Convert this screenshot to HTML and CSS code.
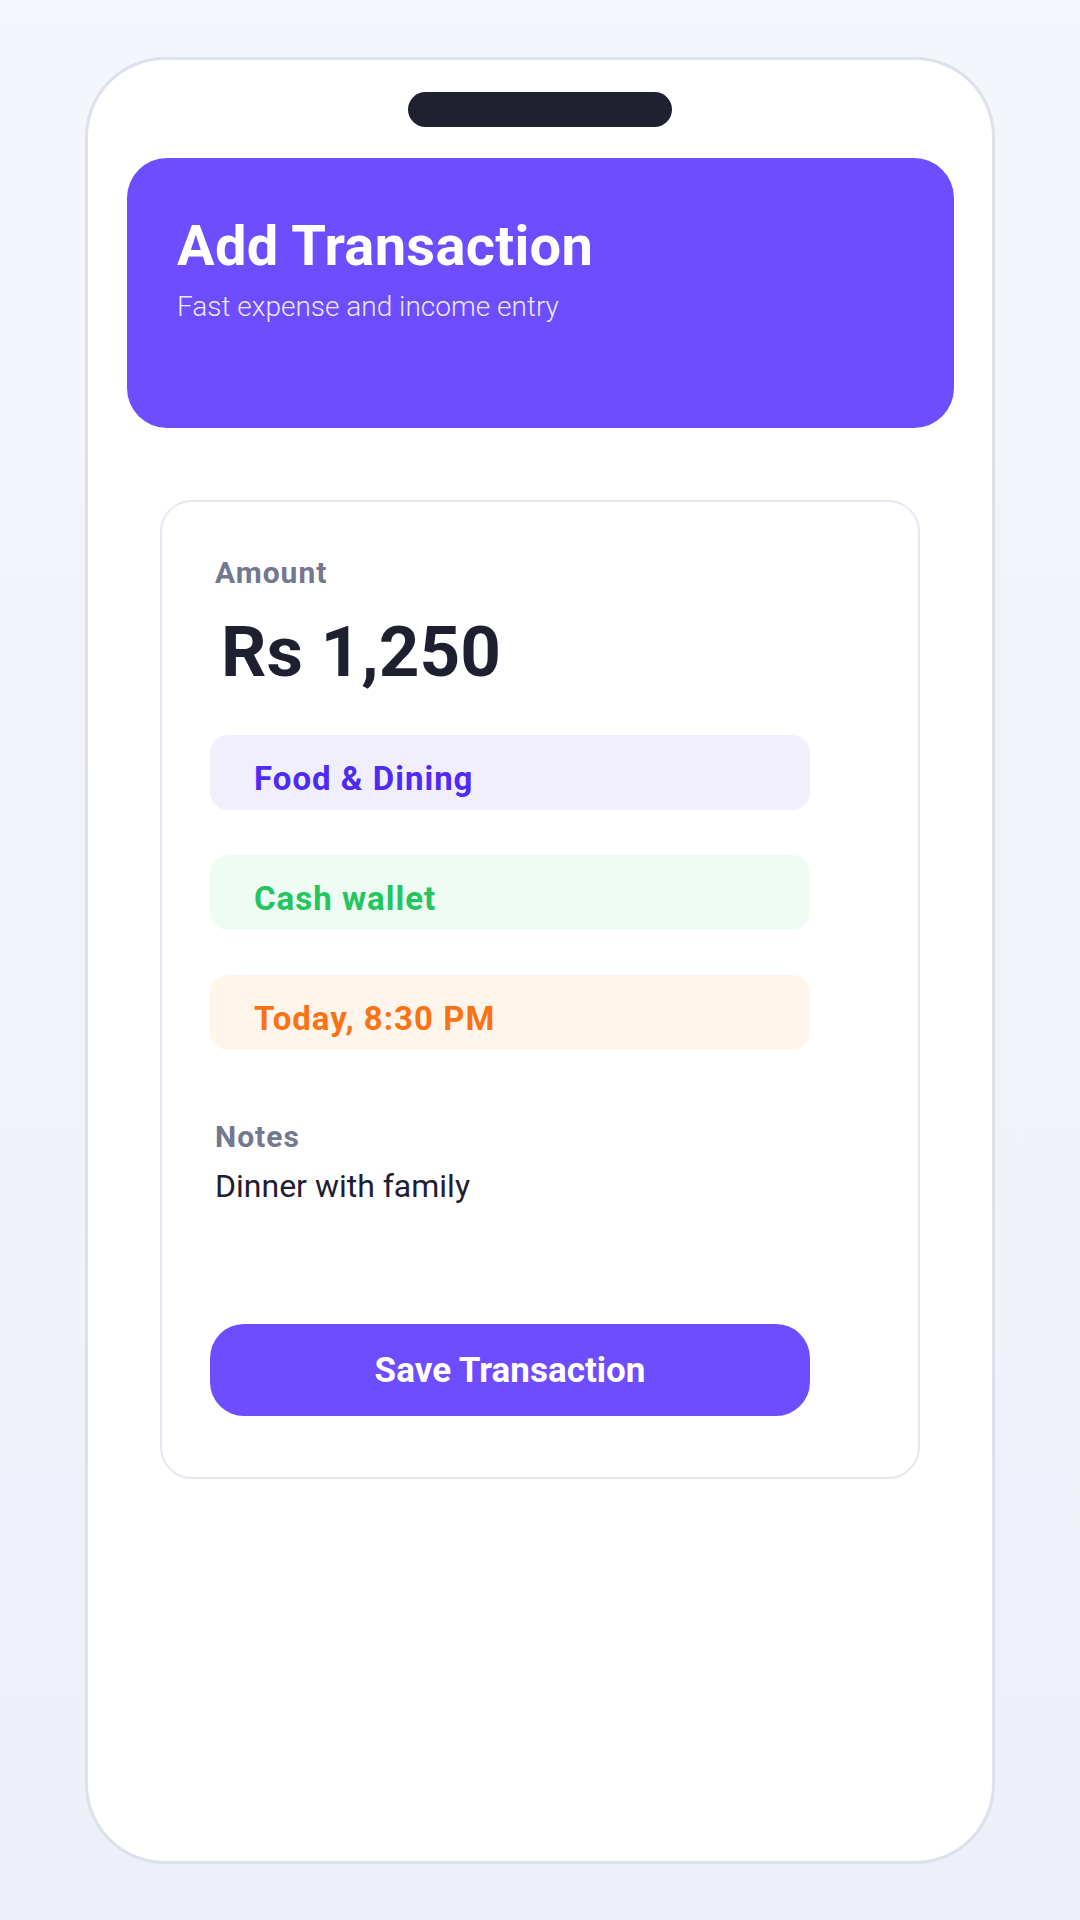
FILE: index.html
```html
<!DOCTYPE html>
<html lang="en">
  <head>
    <meta charset="UTF-8" />
    <meta name="viewport" content="width=device-width, initial-scale=1.0" />
    <title>Add Transaction</title>
    <link rel="stylesheet" href="styles.css">
  </head>
  <body>
    <div class="phone">
      <div class="notch"></div>

      <div class="header">
        <h1>Add Transaction</h1>
        <p>Fast expense and income entry</p>
      </div>

      <div class="card">
        <div class="field-label">Amount</div>
        <div class="amount">Rs 1,250</div>

        <div class="pills">
          <div class="pill pill-category">Food &amp; Dining</div>
          <div class="pill pill-wallet">Cash wallet</div>
          <div class="pill pill-date">Today, 8:30 PM</div>
        </div>

        <div class="field-label notes-label">Notes</div>
        <div class="notes-text">Dinner with family</div>

        <button class="save-button">Save Transaction</button>
      </div>
    </div>
  </body>
</html>
```

FILE: styles.css
```css
body {
  margin: 0;
  min-height: 1920px;
  font-family: Roboto, "Liberation Sans", sans-serif;
  background: linear-gradient(180deg, #f5f6fb 0%, #edf0f9 100%);
  color: #1e2030;
}
.phone {
  box-sizing: border-box;
  width: 910px;
  height: 1807px;
  margin: 57px auto 0;
  border: 3px solid #dde1ec;
  border-radius: 80px;
  background: #ffffff;
  display: flex;
  flex-direction: column;
  align-items: center;
}
.notch {
  width: 264px;
  height: 35px;
  margin-top: 32px;
  border-radius: 18px;
  background: #1f2130;
}
.header {
  box-sizing: border-box;
  align-self: stretch;
  height: 270px;
  margin: 31px 38px 0 39px;
  padding: 61px 50px 0;
  border-radius: 40px;
  background: #6e4cff;
  color: #ffffff;
}
.header h1 {
  margin: 0;
  font-size: 56px;
  line-height: 55px;
  font-weight: 700;
  letter-spacing: 0.3px;
}
.header p {
  margin: 19px 0 0;
  font-size: 28px;
  line-height: 28px;
  font-weight: 300;
  color: #ece8ff;
}
.card {
  box-sizing: border-box;
  width: 760px;
  margin-top: 72px;
  padding: 56px 48px 61px;
  border: 2px solid #e6e6f4;
  border-radius: 32px;
  display: flex;
  flex-direction: column;
  align-items: flex-start;
}
.field-label {
  padding-left: 5px;
  font-size: 30px;
  line-height: 30px;
  font-weight: 700;
  letter-spacing: 1px;
  color: #737790;
}
.amount {
  margin-top: 28px;
  padding-left: 11px;
  font-size: 71px;
  line-height: 72px;
  font-weight: 700;
  color: #1e2030;
}
.pills {
  margin-top: 47px;
  display: flex;
  flex-direction: column;
  gap: 45px;
}
.pill {
  box-sizing: border-box;
  width: 600px;
  height: 75px;
  padding: 11px 44px 0;
  border-radius: 18px;
  display: flex;
  align-items: center;
  font-size: 33px;
  font-weight: 700;
  letter-spacing: 1px;
}
.pill-category {
  background: #f1effe;
  color: #4e2bf3;
}
.pill-wallet {
  background: #eefcf3;
  color: #22c55e;
}
.pill-date {
  background: #fff5eb;
  color: #f97316;
}
.notes-label {
  margin-top: 72px;
}
.notes-text {
  margin-top: 18px;
  padding-left: 5px;
  font-size: 32px;
  line-height: 32px;
  font-weight: 400;
  color: #1e2030;
}
.save-button {
  width: 600px;
  height: 92px;
  margin-top: 122px;
  border: none;
  border-radius: 34px;
  background: #6e4cff;
  color: #ffffff;
  font-family: inherit;
  font-size: 35px;
  font-weight: 700;
  cursor: pointer;
}
```
